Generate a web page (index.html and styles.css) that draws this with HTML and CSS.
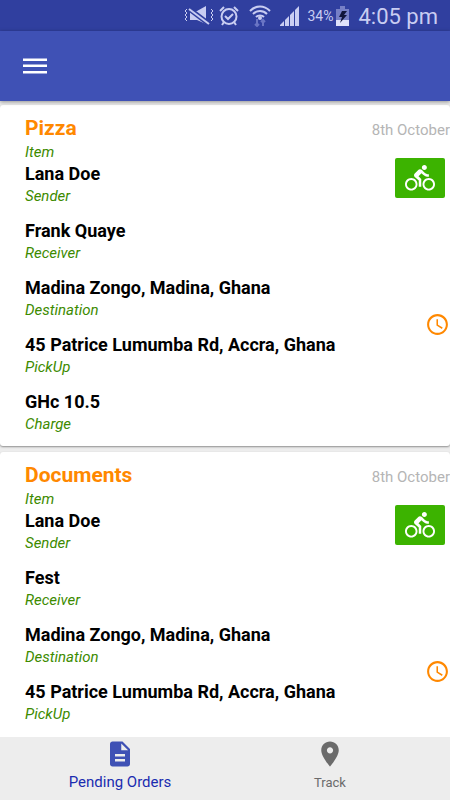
FILE: index.html
```html
<!DOCTYPE html>
<html lang="en">
<head>
    <meta charset="UTF-8">
    <meta name="viewport" content="width=device-width, initial-scale=1.0">
    <title>Pending Orders</title>
    <link rel="stylesheet" href="styles.css">
</head>

<body>
    <svg class="sprite" aria-hidden="true">
        <symbol id="bike" viewBox="0 0 24 24">
            <path d="M15.5 5.5c1.1 0 2-.9 2-2s-.9-2-2-2-2 .9-2 2 .9 2 2 2zM5 12c-2.800 0-5 2.200-5 5s2.200 5 5 5 5-2.200 5-5-2.200-5-5-5zm0 8.500c-1.900 0-3.500-1.600-3.500-3.500s1.600-3.500 3.500-3.500 3.500 1.600 3.500 3.500-1.600 3.500-3.500 3.500zm5.800-10l2.400-2.400.8.800c1.300 1.300 3 2.100 5.100 2.100V9c-1.500 0-2.700-.6-3.600-1.500l-1.900-1.900c-.5-.4-1-.6-1.600-.6s-1.100.2-1.400.6L7.800 8.400c-.4.4-.6.900-.6 1.400 0 .6.2 1.100.6 1.400L11 14v5h2v-6.200l-2.200-2.300zM19 12c-2.800 0-5 2.200-5 5s2.200 5 5 5 5-2.200 5-5-2.200-5-5-5zm0 8.500c-1.900 0-3.500-1.600-3.500-3.500s1.600-3.500 3.500-3.500 3.500 1.600 3.500 3.500-1.600 3.500-3.500 3.500z"/>
        </symbol>
        <symbol id="clock" viewBox="0 0 24 24">
            <path d="M12 2C6.500 2 2 6.500 2 12s4.500 10 10 10 10-4.500 10-10S17.500 2 12 2zm0 18c-4.400 0-8-3.600-8-8s3.600-8 8-8 8 3.600 8 8-3.600 8-8 8zm.5-13H11v6l5.200 3.200.8-1.300-4.500-2.700V7z"/>
        </symbol>
    </svg>

    <div class="status-bar">
        <svg class="mute" viewBox="0 0 30 20">
            <path d="M6 5h7l9-5v18l-9-4H6z"/>
            <path class="cut" d="M4 2l21 16"/>
            <path class="line" d="M5 3l20 15"/>
            <path class="wave" d="M3 3L1 5l2 2-2 2 2 2-2 2 2 2M27 3l2 2-2 2 2 2-2 2 2 2-2 2"/>
        </svg>
        <svg class="alarm" viewBox="0 0 20 20">
            <circle cx="10" cy="10.500" r="7.500"/>
            <path d="M6 10l3 3 5-5M1 5l4-4M19 5l-4-4M5 16l-2 3M15 16l2 3"/>
        </svg>
        <svg class="wifi" viewBox="0 0 22 22">
            <path class="arc" d="M1 6c6-6 14-6 20 0M4 9c4-4 10-4 14 0M7 12c2-2 6-2 8 0"/>
            <circle cx="11" cy="13" r="2"/>
            <path class="data" d="M8 14v7M6 19l2 2 2-2M14 21v-6M12 17l2-2 2 2"/>
        </svg>
        <svg class="signal" viewBox="0 0 20 20">
            <path d="M0 20v-1l4-4v5zM5 20v-6l4-4v10zM10 20V9l4-4v15zM15 20V4l4-4v20z"/>
        </svg>
        <span class="percent">34%</span>
        <svg class="battery" viewBox="0 0 13 20">
            <path class="shell" d="M4 0h5v3h4v17H0V3h4z"/>
            <path class="level" d="M0 14h13v6H0z"/>
            <path class="bolt" d="M6 5h5L8 9h3l-7 8 2-6H3z"/>
        </svg>
        <span class="time">4:05 pm</span>
    </div>

    <header class="toolbar">
        <button type="button" class="menu-btn" aria-label="Menu">
            <svg viewBox="0 0 24 16"><path d="M0 .5h24V3H0zM0 6.500h24V9H0zM0 13h24v2.500H0z"/></svg>
        </button>
    </header>

    <main class="orders">
        <article class="card">
            <dl class="details">
                <div class="field item"><dd>Pizza</dd><dt>Item</dt></div>
                <div class="field"><dd>Lana Doe</dd><dt>Sender</dt></div>
                <div class="field"><dd>Frank Quaye</dd><dt>Receiver</dt></div>
                <div class="field"><dd>Madina Zongo, Madina, Ghana</dd><dt>Destination</dt></div>
                <div class="field"><dd>45 Patrice Lumumba Rd, Accra, Ghana</dd><dt>PickUp</dt></div>
                <div class="field"><dd>GHc 10.5</dd><dt>Charge</dt></div>
            </dl>
            <div class="side">
                <span class="date">8th October</span>
                <button type="button" class="bike-btn" aria-label="Delivery by bike"><svg><use href="#bike"/></svg></button>
                <svg class="clock"><use href="#clock"/></svg>
            </div>
        </article>

        <article class="card">
            <dl class="details">
                <div class="field item"><dd>Documents</dd><dt>Item</dt></div>
                <div class="field"><dd>Lana Doe</dd><dt>Sender</dt></div>
                <div class="field"><dd>Fest</dd><dt>Receiver</dt></div>
                <div class="field"><dd>Madina Zongo, Madina, Ghana</dd><dt>Destination</dt></div>
                <div class="field last"><dd>45 Patrice Lumumba Rd, Accra, Ghana</dd><dt>PickUp</dt></div>
            </dl>
            <div class="side">
                <span class="date">8th October</span>
                <button type="button" class="bike-btn" aria-label="Delivery by bike"><svg><use href="#bike"/></svg></button>
                <svg class="clock"><use href="#clock"/></svg>
            </div>
        </article>
    </main>

    <nav class="bottom-nav">
        <a href="#pending" class="tab active">
            <svg viewBox="0 0 24 24"><path d="M14 2H6c-1.100 0-2 .9-2 2v16c0 1.100.9 2 2 2h12c1.100 0 2-.9 2-2V8l-6-6zm2 16H8v-2h8v2zm0-4H8v-2h8v2zm-3-5V3.500L18.500 9H13z"/></svg>
            <span>Pending Orders</span>
        </a>
        <a href="#track" class="tab">
            <svg viewBox="0 0 24 24"><path d="M12 2C8.100 2 5 5.100 5 9c0 5.200 7 13 7 13s7-7.800 7-13c0-3.900-3.100-7-7-7zm0 9.500c-1.400 0-2.500-1.100-2.500-2.500s1.100-2.500 2.500-2.500 2.500 1.100 2.500 2.500-1.100 2.500-2.500 2.500z"/></svg>
            <span>Track</span>
        </a>
    </nav>
</body>
</html>
```
FILE: styles.css
```css
* {
    box-sizing: border-box;
}

body {
    margin: 0;
    height: 100vh;
    display: flex;
    flex-direction: column;
    font-family: Roboto, sans-serif;
    background-color: #ededed;
}

button {
    border: none;
    padding: 0;
    cursor: pointer;
}

.sprite {
    display: none;
}

/* status bar */
.status-bar {
    flex: none;
    display: flex;
    align-items: center;
    justify-content: flex-end;
    height: 31px;
    padding-right: 12px;
    background-color: #303f9f;
    color: #c9cdf2;
    fill: #c9cdf2;
}

.status-bar svg {
    height: 20px;
}

.mute {
    width: 30px;
    margin-right: 5px;
}

.mute .cut {
    stroke: #303f9f;
    stroke-width: 5;
}

.mute .line {
    stroke: #c9cdf2;
    stroke-width: 2;
}

.mute .wave {
    fill: none;
    stroke: #c9cdf2;
    stroke-width: 1;
}

.alarm {
    width: 20px;
    margin-right: 10px;
    fill: none;
    stroke: #c9cdf2;
    stroke-width: 2;
}

.status-bar .wifi {
    width: 22px;
    height: 22px;
    margin-right: 9px;
}

.wifi .arc {
    fill: none;
    stroke: #c9cdf2;
    stroke-width: 2;
}

.wifi .data {
    fill: none;
    stroke: #6a75c4;
    stroke-width: 2;
}

.signal {
    width: 20px;
    margin-right: 7px;
}

.percent {
    font-size: 14px;
    margin-right: 3px;
}

.battery {
    width: 13px;
    margin-right: 9px;
}

.battery .shell {
    fill: #7780c6;
}

.battery .level {
    fill: #dfe2fa;
}

.battery .bolt {
    fill: #11163c;
}

.time {
    font-size: 22px;
    line-height: 31px;
    padding-top: 2px;
}

/* toolbar */
.toolbar {
    flex: none;
    display: flex;
    align-items: center;
    height: 70px;
    padding-left: 23px;
    background-color: #3f51b5;
    box-shadow: 0 1px 4px rgba(0, 0, 0, 0.4);
    z-index: 1;
}

.menu-btn {
    background: none;
}

.menu-btn svg {
    display: block;
    width: 24px;
    height: 16px;
    fill: #fff;
}

/* order cards */
.orders {
    flex: 1;
    min-height: 0;
    padding-top: 4px;
    overflow-y: auto;
    scrollbar-width: none;
}

.card {
    display: flex;
    justify-content: space-between;
    margin-bottom: 6px;
    padding: 12px 0 11px 25px;
    background-color: #fff;
    border-radius: 3px;
    box-shadow: 0 1px 2px rgba(0, 0, 0, 0.4);
}

.details {
    margin: 0;
}

.field {
    margin-bottom: 13px;
    line-height: 22px;
}

.field:last-child {
    margin-bottom: 0;
}

.field.last {
    margin-bottom: 13px;
}

.field dd {
    margin: 0;
    font-size: 18px;
    font-weight: 700;
    color: #000;
}

.field dt {
    font-size: 15px;
    font-style: italic;
    color: #3d8b00;
}

.field.item {
    margin-bottom: 0;
}

.item dd {
    margin-bottom: 2px;
    font-size: 21px;
    color: #ff8800;
}

.side {
    flex: none;
    display: flex;
    flex-direction: column;
    align-items: flex-end;
}

.date {
    font-size: 15px;
    line-height: 26px;
    color: #b5b5b5;
}

.bike-btn {
    display: flex;
    align-items: center;
    justify-content: center;
    width: 50px;
    height: 40px;
    margin: 15px 5px 114px 0;
    background-color: #3cb300;
    border-radius: 2px;
}

.bike-btn svg {
    width: 30px;
    height: 30px;
    fill: #fff;
}

.clock {
    width: 25px;
    height: 25px;
    fill: #ff8800;
}

/* bottom navigation */
.bottom-nav {
    flex: none;
    display: flex;
    height: 63px;
    padding: 0 15px;
    background-color: #ededed;
}

.tab {
    flex: 1;
    display: flex;
    flex-direction: column;
    align-items: center;
    gap: 3px;
    padding-top: 2px;
    font-size: 13px;
    line-height: 22px;
    color: #6b6b6b;
    fill: #6b6b6b;
    text-decoration: none;
}

.tab svg {
    width: 30px;
    height: 30px;
}

.tab.active {
    gap: 2px;
    font-size: 15px;
    color: #1a2cb0;
    fill: #3f51b5;
}
```
